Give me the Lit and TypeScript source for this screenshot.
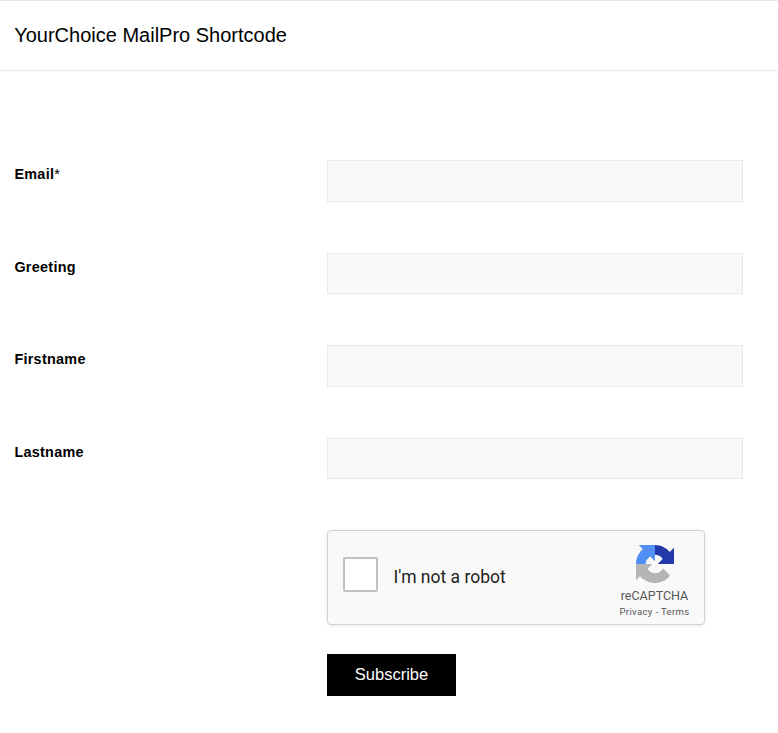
import { LitElement, html, css } from "lit";
import { customElement } from "lit/decorators.js";

interface Field {
  label: string;
  required?: boolean;
}

const FIELDS: Field[] = [
  { label: "Email", required: true },
  { label: "Greeting" },
  { label: "Firstname" },
  { label: "Lastname" },
];

@customElement("captcha-box")
export class CaptchaBox extends LitElement {
  static styles = css`
    :host {
      display: flex;
      box-sizing: border-box;
      width: 378px;
      height: 95px;
      border: 1px solid #d3d3d3;
      border-radius: 4px;
      background: #f9f9f9;
      box-shadow: 0 1px 4px rgba(0, 0, 0, 0.08);
      font-family: Roboto, "Liberation Sans", sans-serif;
    }
    .check {
      box-sizing: border-box;
      width: 35px;
      height: 35px;
      margin: 26px 0 0 15px;
      border: 2px solid #c1c1c1;
      border-radius: 2px;
      background: #fff;
    }
    .text {
      margin: 36px 0 0 15.5px;
      font-size: 17.5px;
      line-height: 21px;
      color: #222;
      white-space: nowrap;
    }
    .brand {
      display: flex;
      flex-direction: column;
      align-items: center;
      width: 72px;
      margin: 14px 14px 0 auto;
      color: #555;
      white-space: nowrap;
    }
    .logo {
      display: block;
      width: 38px;
      height: 38px;
      margin-left: 2px;
    }
    .name {
      margin-top: 5px;
      font-size: 12.5px;
      line-height: 15px;
      margin-left: 1px;
    }
    .links {
      margin: 3px 0 0 1px;
      font-size: 9.6px;
      letter-spacing: 0.33px;
      line-height: 12px;
    }
  `;

  render() {
    return html`
      <div class="check" role="checkbox" aria-checked="false"></div>
      <div class="text">I'm not a robot</div>
      <div class="brand">
        <svg class="logo" viewBox="0 0 64 64" aria-hidden="true">
          <path fill="#2239ab" d="M64 31.955l-.033-1.37V4.687l-7.16 7.16C50.948 4.674 42.033.093 32.05.093c-10.4 0-19.622 4.96-25.458 12.64l11.736 11.86a15.55 15.55 0 0 1 4.754-5.334c2.05-1.6 4.952-2.906 8.968-2.906.485 0 .86.057 1.135.163 4.976.393 9.288 3.14 11.828 7.124l-8.307 8.307L64 31.953" />
          <path fill="#5090f5" d="M31.862.094l-1.37.033H4.594l7.16 7.16C4.58 13.147 0 22.06 0 32.046c0 10.4 4.96 19.622 12.64 25.458L24.5 45.768a15.55 15.55 0 0 1-5.334-4.754c-1.6-2.05-2.906-4.952-2.906-8.968 0-.485.057-.86.163-1.135.393-4.976 3.14-9.288 7.124-11.828l8.307 8.307L31.86.095" />
          <path fill="#b5b5b5" d="M.001 32.045l.033 1.37v25.898l7.16-7.16c5.86 7.173 14.774 11.754 24.76 11.754 10.4 0 19.622-4.96 25.458-12.64l-11.736-11.86a15.55 15.55 0 0 1-4.754 5.334c-2.05 1.6-4.952 2.906-8.968 2.906-.485 0-.86-.057-1.135-.163-4.976-.393-9.288-3.14-11.828-7.124l8.307-8.307c-10.522.04-22.4.066-27.295-.005" />
        </svg>
        <div class="name">reCAPTCHA</div>
        <div class="links">Privacy - Terms</div>
      </div>
    `;
  }
}

@customElement("app-root")
export class AppRoot extends LitElement {
  static styles = css`
    :host {
      display: block;
      box-sizing: border-box;
      height: 733px;
      overflow: hidden;
      background: #fff;
      color: #000;
      font-family: "Liberation Sans", Arial, sans-serif;
    }
    .title {
      box-sizing: border-box;
      height: 71px;
      margin: 0;
      padding: 0 14.2px;
      border: solid #e9e9e9;
      border-width: 1px 0;
      font-size: 20px;
      font-weight: 400;
      line-height: 68px;
    }
    .form {
      display: flex;
      flex-direction: column;
      padding: 89.4px 35px 0 14px;
    }
    .row {
      display: grid;
      grid-template-columns: 313px 416px;
      height: 92.5px;
    }
    .label {
      padding: 5px 0 0 0.4px;
      font-size: 14.4px;
      font-weight: 700;
      letter-spacing: 0.28px;
      line-height: 18px;
    }
    .star {
      font-weight: 400;
      letter-spacing: 0;
    }
    .input {
      box-sizing: border-box;
      width: 416px;
      height: 41.2px;
      margin: 0;
      padding: 0 10px;
      border: 1px solid #e9e9e9;
      border-radius: 0;
      background: #f8f8f8;
      outline: none;
    }
    .actions {
      display: flex;
      flex-direction: column;
      align-items: flex-start;
      gap: 29px;
      margin: -0.4px 0 0 313px;
    }
    .submit {
      width: 129px;
      height: 42px;
      padding: 0 0 2px;
      border: 0;
      background: #000;
      color: #fff;
      font: 16.5px/40px "Liberation Sans", Arial, sans-serif;
    }
  `;

  render() {
    return html`
      <h1 class="title">YourChoice MailPro Shortcode</h1>
      <div class="form">
        ${FIELDS.map(
          (f) => html`
            <label class="row">
              <span class="label">${f.label}${f.required ? html`<span class="star">*</span>` : ""}</span>
              <input class="input" type="text" />
            </label>
          `
        )}
        <div class="actions">
          <captcha-box></captcha-box>
          <button class="submit" type="button">Subscribe</button>
        </div>
      </div>
    `;
  }
}
